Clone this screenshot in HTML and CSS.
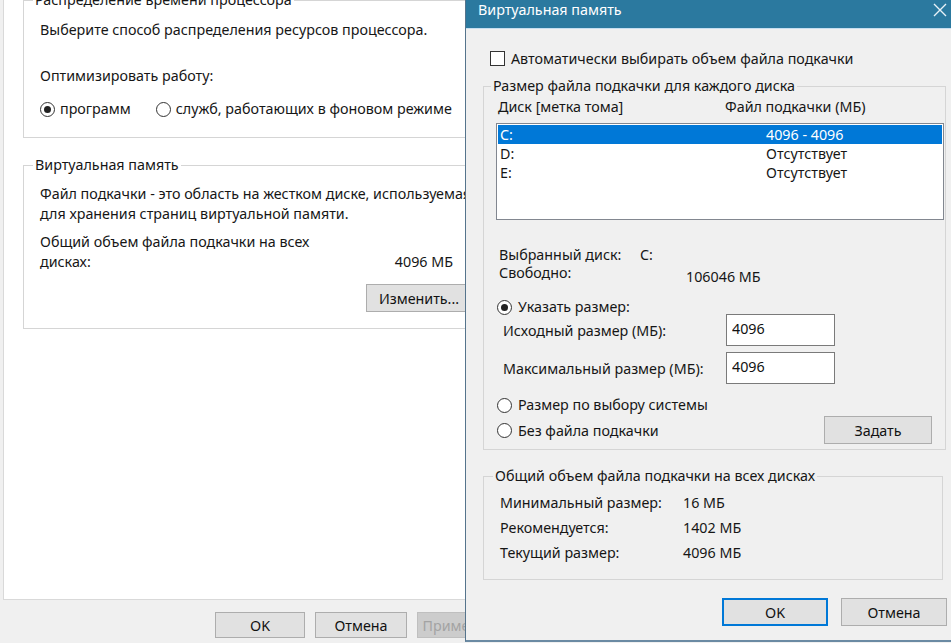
FILE: index.html
```html
<!DOCTYPE html>
<html lang="ru">
<head>
    <meta charset="UTF-8">
    <title>Виртуальная память</title>
    <link rel="stylesheet" href="styles.css">
</head>
<body>
    <div class="screen">
        <!-- System properties window (behind) -->
        <div class="sysprops">
            <div class="tab-page">
                <fieldset class="group group-cpu">
                    <legend>Распределение времени процессора</legend>
                    <p class="line">Выберите способ распределения ресурсов процессора.</p>
                    <p class="line cpu-opt">Оптимизировать работу:</p>
                    <div class="radio-row">
                        <label class="radio checked"><span class="radio-dot"></span>программ</label>
                        <label class="radio"><span class="radio-dot"></span>служб, работающих в фоновом режиме</label>
                    </div>
                </fieldset>

                <fieldset class="group group-vm">
                    <legend>Виртуальная память</legend>
                    <p class="line nowrap">Файл подкачки - это область на жестком диске, используемая Windows<br>для хранения страниц виртуальной памяти.</p>
                    <div class="vm-total">
                        <span class="vm-total-label">Общий объем файла подкачки на всех дисках:</span>
                        <span class="vm-total-value">4096 МБ</span>
                    </div>
                    <div class="vm-actions">
                        <button class="btn btn-change">Изменить...</button>
                    </div>
                </fieldset>
            </div>
            <div class="sys-footer">
                <button class="btn btn-sys">OK</button>
                <button class="btn btn-sys btn-cancel">Отмена</button>
                <button class="btn btn-sys" disabled>Применить</button>
            </div>
        </div>

        <!-- Virtual memory dialog -->
        <div class="dialog">
            <div class="titlebar">
                <span class="title">Виртуальная память</span>
                <svg class="close" width="16" height="16" viewBox="0 0 16 16">
                    <path d="M2 2 L14 14 M14 2 L2 14" stroke="#e8f2f8" stroke-width="1.4" fill="none"/>
                </svg>
            </div>
            <div class="dialog-body">
                <label class="auto-row"><span class="checkbox"></span>Автоматически выбирать объем файла подкачки</label>

                <fieldset class="group group-disks">
                    <legend>Размер файла подкачки для каждого диска</legend>
                    <div class="col-heads">
                        <span class="col-disk">Диск [метка тома]</span>
                        <span>Файл подкачки (МБ)</span>
                    </div>
                    <div class="listbox">
                        <div class="list-row selected"><span class="col-name">C:</span><span>4096 - 4096</span></div>
                        <div class="list-row"><span class="col-name">D:</span><span>Отсутствует</span></div>
                        <div class="list-row"><span class="col-name">E:</span><span>Отсутствует</span></div>
                    </div>

                    <div class="disk-info">
                        <div class="info-row"><span class="info-label">Выбранный диск:</span><span>C:</span></div>
                        <div class="info-row"><span class="info-label wide">Свободно:</span><span class="free-value">106046 МБ</span></div>
                    </div>

                    <label class="radio opt-custom checked"><span class="radio-dot"></span>Указать размер:</label>
                    <div class="size-row">
                        <span class="size-label">Исходный размер (МБ):</span>
                        <input class="textbox" type="text" value="4096">
                    </div>
                    <div class="size-row second">
                        <span class="size-label">Максимальный размер (МБ):</span>
                        <input class="textbox" type="text" value="4096">
                    </div>
                    <label class="radio opt-system"><span class="radio-dot"></span>Размер по выбору системы</label>
                    <div class="set-row">
                        <label class="radio"><span class="radio-dot"></span>Без файла подкачки</label>
                        <button class="btn btn-set">Задать</button>
                    </div>
                </fieldset>

                <fieldset class="group group-summary">
                    <legend>Общий объем файла подкачки на всех дисках</legend>
                    <div class="sum-row"><span class="sum-label">Минимальный размер:</span><span>16 МБ</span></div>
                    <div class="sum-row"><span class="sum-label">Рекомендуется:</span><span>1402 МБ</span></div>
                    <div class="sum-row"><span class="sum-label">Текущий размер:</span><span>4096 МБ</span></div>
                </fieldset>

                <div class="dialog-footer">
                    <button class="btn btn-dlg btn-default">OK</button>
                    <button class="btn btn-dlg">Отмена</button>
                </div>
            </div>
        </div>
    </div>
</body>
</html>
```

FILE: styles.css
```css
* {
    box-sizing: border-box;
}

html, body {
    margin: 0;
}

body {
    width: 951px;
    height: 643px;
    overflow: hidden;
    font-family: "Noto Sans", "Open Sans", sans-serif;
    font-size: 14.3px;
    color: #161616;
    background: #f0f0f0;
}

p {
    margin: 0;
}

.line {
    line-height: 20px;
}

.nowrap {
    white-space: nowrap;
}

.screen {
    display: flex;
    height: 643px;
}

/* ---------- window behind ---------- */

.sysprops {
    width: 465px;
    flex: none;
    overflow: hidden;
    background: #f0f0f0;
}

.tab-page {
    display: flex;
    flex-direction: column;
    width: 540px;
    height: 600px;
    margin-left: 3px;
    padding: 0 19px;
    background: #fff;
    border: 1px solid #d9d9d9;
    border-top: 0;
}

.group {
    margin: 0;
    padding: 0 0 0 16px;
    min-width: 0;
    border: 1px solid #d5d5d5;
}

.group legend {
    margin-left: -7px;
    padding: 0 2px;
    line-height: 20px;
}

.group-cpu {
    margin-top: -10px;
    padding-top: 10px;
    padding-bottom: 18px;
}

.cpu-opt {
    margin-top: 26px;
}

.radio-row {
    display: flex;
    gap: 25px;
    margin-top: 13px;
    line-height: 20px;
}

.radio {
    display: flex;
    align-items: center;
    gap: 5px;
}

.radio-dot {
    width: 15px;
    height: 15px;
    flex: none;
    border: 1px solid #333;
    border-radius: 50%;
    background: #fff;
    position: relative;
}

.radio.checked .radio-dot::after {
    content: "";
    position: absolute;
    left: 3px;
    top: 3px;
    width: 7px;
    height: 7px;
    border-radius: 50%;
    background: #222;
}

.group-vm {
    margin-top: 17px;
    padding-top: 9px;
    padding-bottom: 16px;
}

.vm-total {
    display: flex;
    align-items: flex-end;
    width: 413px;
    margin-top: 8px;
    line-height: 20px;
}

.vm-total-label {
    width: 275px;
}

.vm-total-value {
    margin-left: auto;
}

.vm-actions {
    display: flex;
    margin-top: 12px;
    padding-left: 326px;
}

.btn {
    font-family: inherit;
    font-size: 14.3px;
    color: #111;
    background: #e1e1e1;
    border: 1px solid #adadad;
    padding: 0;
}

.btn-change {
    width: 106px;
    height: 28px;
}

.sys-footer {
    display: flex;
    gap: 10px;
    padding: 12px 0 0 215px;
}

.btn-sys {
    width: 90px;
    height: 26px;
    flex: none;
}

.btn-cancel {
    width: 92px;
}

.btn-sys:disabled {
    color: #a3a3a3;
    background: #cccccc;
    border-color: #bfbfbf;
}

/* ---------- dialog ---------- */

.dialog {
    width: 486px;
    height: 642px;
    flex: none;
    display: flex;
    flex-direction: column;
    background: #f0f0f0;
    border-left: 1px solid #55748c;
    border-bottom: 2px solid #6b8aa3;
}

.titlebar {
    display: flex;
    justify-content: space-between;
    align-items: flex-start;
    height: 29px;
    padding: 0 3px 0 12px;
    background: #2b799f;
    border-bottom: 1px solid #c6def0;
    color: #fff;
    line-height: 20px;
}

.close {
    margin-top: 2px;
}

.dialog-body {
    flex: 1;
    padding: 19px 5px 0 17px;
}

.auto-row {
    display: flex;
    align-items: center;
    gap: 6px;
    height: 20px;
    padding-left: 7px;
}

.checkbox {
    width: 15px;
    height: 15px;
    border: 1px solid #333;
    background: #fff;
}

.group-disks {
    margin-top: 8px;
    padding: 1px 13px 5px 14px;
}

.col-heads {
    display: flex;
    line-height: 20px;
}

.col-disk {
    width: 227px;
}

.listbox {
    width: 448px;
    height: 97px;
    margin: 6px 0 0 -2px;
    padding: 1px;
    background: #fff;
    border: 1px solid #828790;
}

.list-row {
    display: flex;
    height: 19px;
    line-height: 19px;
    padding-left: 2px;
}

.list-row.selected {
    background: #0078d7;
    color: #fff;
}

.col-name {
    width: 266px;
}

.disk-info {
    margin-top: 26px;
    padding-left: 1px;
}

.info-row {
    display: flex;
    align-items: flex-start;
    line-height: 18px;
}

.info-label {
    width: 141px;
}

.info-label.wide {
    width: 187px;
}

.free-value {
    margin: 4px 0 -4px;
}

.opt-custom {
    margin: 16px 0 0 -1px;
    gap: 6px;
    line-height: 18px;
}

.size-row {
    display: flex;
    align-items: center;
    margin-top: -2px;
    padding-left: 5px;
}

.size-row.second {
    margin-top: 6px;
}

.size-label {
    width: 223px;
}

.textbox {
    width: 109px;
    height: 32px;
    padding: 0 5px 4px;
    font-family: inherit;
    font-size: 14.3px;
    color: #111;
    background: #fff;
    border: 1px solid #7a7a7a;
    outline: none;
}

.opt-system {
    margin: 12px 0 0 -1px;
    gap: 6px;
    line-height: 18px;
}

.set-row {
    display: flex;
    justify-content: space-between;
    align-items: center;
    margin: 2px 0 0 -1px;
}

.set-row .radio {
    gap: 6px;
}

.btn-set {
    width: 108px;
    height: 28px;
}

.group-summary {
    margin: 16px 3px 0 0;
    padding: 4px 0 14px 16px;
}

.sum-row {
    display: flex;
    height: 25px;
    align-items: center;
}

.sum-label {
    width: 183px;
}

.dialog-footer {
    display: flex;
    justify-content: flex-end;
    gap: 13px;
    margin: 18px -1px 0 0;
}

.btn-dlg {
    width: 106px;
    height: 28px;
}

.btn-default {
    border: 2px solid #0078d7;
}
```
